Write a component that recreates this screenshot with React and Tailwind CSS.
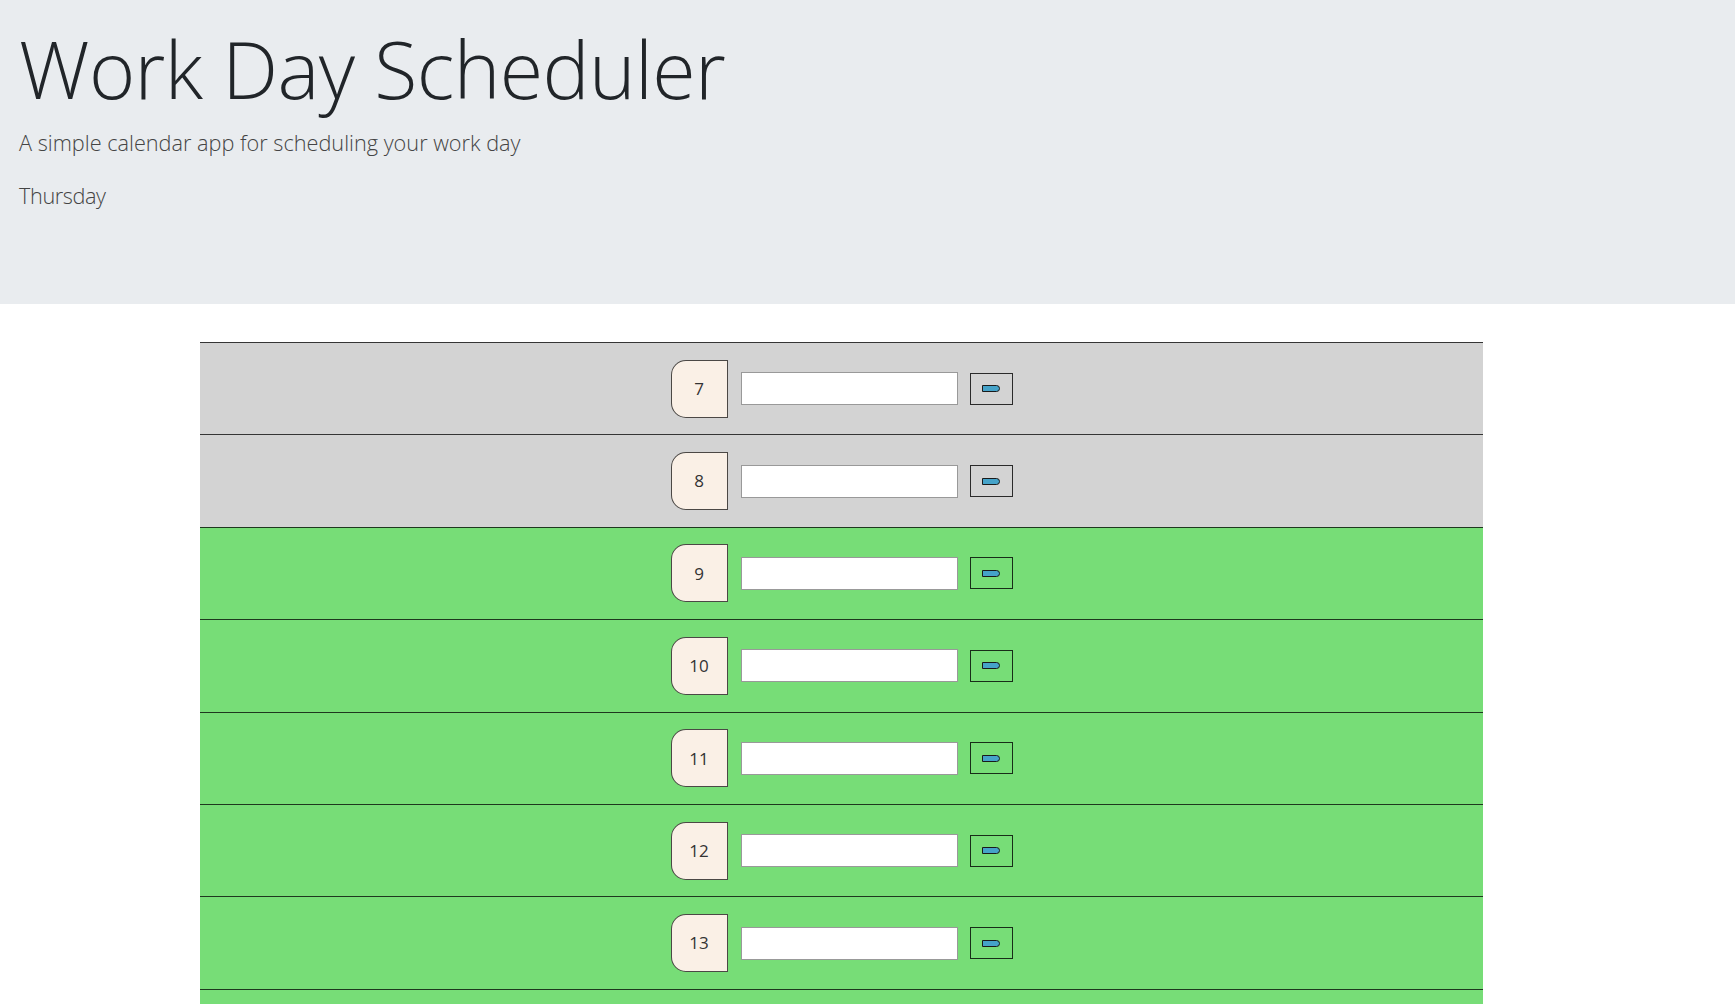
import React from "react";

const hours = [7, 8, 9, 10, 11, 12, 13, 14, 15, 16, 17];
const current = 8; // hours <= 8 shown as past

function Row({ hour }) {
  const past = hour <= current;
  return (
    <div
      className={
        "h-[92.4px] border-t border-black/75 flex items-center justify-center " +
        (past ? "bg-[#d3d3d3]" : "bg-[#77dd77]")
      }
    >
      <div className="w-[57px] h-[58px] mr-[13px] rounded-l-[15px] border border-black/70 bg-[#faf0e6] flex items-center justify-center text-[17px] text-[#333]">
        {hour}
      </div>
      <input
        type="text"
        className="w-[217px] h-[33px] mr-[12px] border border-[#999] bg-white outline-none"
      />
      <button className="w-[43px] h-[32px] border border-black/80 flex items-center justify-center">
        <span className="block w-[18px] h-[7px] bg-[#45a3c9] border border-[#1a1a1a] rounded-r-full rounded-l-[2px]" />
      </button>
    </div>
  );
}

export default function App() {
  return (
    <div className="min-h-screen bg-white font-['Open_Sans',sans-serif] text-[#212529]">
      <header className="h-[304px] bg-[#e9ecef] px-[19px] pt-[22px]">
        <h1 className="text-[79px] leading-[1.2] font-light text-[#212529] tracking-[-0.6px]">
          Work Day Scheduler
        </h1>
        <p className="mt-[10px] text-[21.7px] leading-[1.5] font-light text-[#444]">
          A simple calendar app for scheduling your work day
        </p>
        <p className="mt-[21px] text-[21.7px] leading-[1.5] font-light text-[#444] tracking-[-0.4px]">
          Thursday
        </p>
      </header>
      <div className="ml-[200px] w-[1283px] mt-[38px]">
        {hours.map((h) => (
          <Row key={h} hour={h} />
        ))}
      </div>
    </div>
  );
}
